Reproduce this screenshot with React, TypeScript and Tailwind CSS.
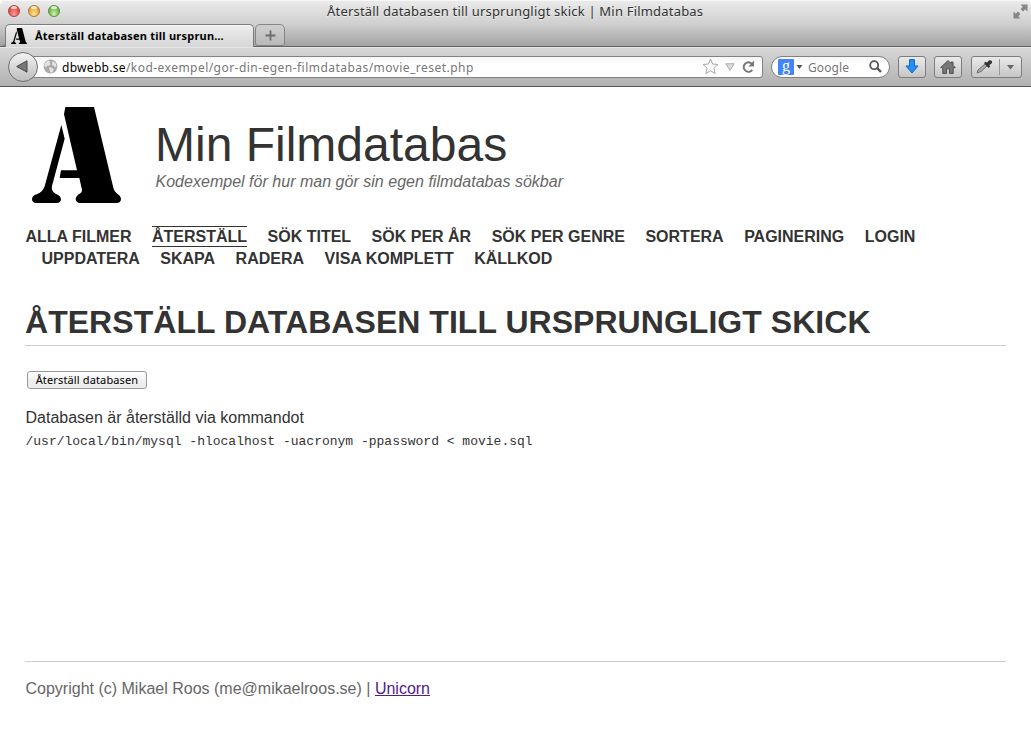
import React from "react";

const NAV = [
  "ALLA FILMER",
  "ÅTERSTÄLL",
  "SÖK TITEL",
  "SÖK PER ÅR",
  "SÖK PER GENRE",
  "SORTERA",
  "PAGINERING",
  "LOGIN",
  "UPPDATERA",
  "SKAPA",
  "RADERA",
  "VISA KOMPLETT",
  "KÄLLKOD",
];

function LetterLogo({ className }: { className: string }) {
  return (
    <svg className={className} viewBox="36 21 267 288" preserveAspectRatio="none" fill="#000">
      <path d="M136 21H222L280 263C282 271 287 277 292 281C299 286 303 291 303 297C303 305 298 309 289 309H181C172 309 167 304 167 297C167 291 173 285 181 280C187 276 187 270 184 261L178 234H119L123 211H171L132 43Z" />
      <path d="M124 75L134 116L96 258C94 270 99 277 108 282C117 286 123 291 123 298C123 305 118 309 110 309H49C40 309 36 304 36 298C36 290 41 286 50 283C62 279 70 271 74 259Z" />
    </svg>
  );
}

function Light({ tone }: { tone: string }) {
  return (
    <span className={`relative block h-3 w-3 overflow-hidden rounded-full border ${tone}`}>
      <span className="absolute left-[2px] top-0 h-[3px] w-[6px] rounded-full bg-white/70" />
    </span>
  );
}

function TitleBar() {
  return (
    <div className="flex h-6 items-center pl-2">
      <div className="flex w-[100px] gap-2 pb-[2px]">
        <Light tone="border-[#a8433f] bg-radial-[at_50%_85%] from-[#ff9f98] via-[#ee625d] to-[#c53c38]" />
        <Light tone="border-[#a9752f] bg-radial-[at_50%_85%] from-[#ffe795] via-[#f5b84f] to-[#c98a30]" />
        <Light tone="border-[#578c43] bg-radial-[at_50%_85%] from-[#d1f3a6] via-[#8bc965] to-[#58993f]" />
      </div>
      <div className="-mt-[2px] flex-1 whitespace-nowrap pl-[219px] text-[13px] leading-6 tracking-[0.2px] text-[#333] [text-shadow:0_1px_0_#ffffff80]">
        Återställ databasen till ursprungligt skick | Min Filmdatabas
      </div>
      <svg className="mb-[2px] mr-[3px] h-[15px] w-[15px]" viewBox="0 0 15 15" fill="#858585">
        <path d="M7.5 0.5H14.5V7.5L12.2 5.2L10 7.4L7.6 5L9.8 2.8ZM0.5 7.5L2.8 9.8L5 7.6L7.4 10L5.2 12.2L7.5 14.5H0.5Z" />
      </svg>
    </div>
  );
}

function TabStrip() {
  return (
    <div className="flex h-[23px] items-end border-b border-[#636363] bg-linear-to-b from-transparent to-black/10">
      <div className="-mb-px h-[23px] w-[5px] rounded-br-[4px] border-b border-[#636363]" />
      <div className="-mb-px flex h-[23px] w-[249px] items-center rounded-t-[5px] border-x border-t border-[#7b7b7b] bg-linear-to-b from-[#eeeeee] to-[#d6d6d6] pl-[5px] shadow-[inset_0_1px_0_#fafafa]">
        <LetterLogo className="h-4 w-4" />
        <span className="pl-2 text-[11px] font-bold tracking-[0.23px] text-black">
          Återställ databasen till ursprun…
        </span>
      </div>
      <div className="ml-px flex h-[22px] w-[30px] items-center justify-center rounded-t-[5px] rounded-b-[3px] border border-[#858585] bg-linear-to-b from-[#cfcfcf] to-[#b9b9b9]">
        <svg className="h-[11px] w-[11px]" viewBox="0 0 11 11" stroke="#6b6b6b" strokeWidth="1.8">
          <path d="M5.5 0.5V10.5M0.5 5.5H10.5" />
        </svg>
      </div>
    </div>
  );
}

function AddressBar() {
  return (
    <div className="flex flex-1 items-center">
      <div className="relative z-10 flex h-[30px] w-[30px] items-center justify-center rounded-full border border-[#6f6f6f] bg-linear-to-b from-[#f3f3f3] to-[#bdbdbd]">
        <svg className="mr-[3px] h-[13px] w-3" viewBox="0 0 12 13">
          <path d="M0.7 6.5L11 0.8V12.2Z" fill="#777" stroke="#484848" />
        </svg>
      </div>
      <div className="-ml-2 flex h-[22px] flex-1 items-center rounded-r-[3px] border border-[#828282] bg-linear-to-b from-[#f6f6f6] to-white to-40% pl-[12px] pr-[7px]">
        <svg className="h-[15px] w-[15px]" viewBox="0 0 15 15">
          <circle cx="7.5" cy="7.5" r="6.9" fill="#a9a9a9" />
          <path d="M2 4L5 1.6L7.5 2.5L6.5 4L7.6 5L5.5 7L4 6.5L3.4 8.5L1.2 7Z" fill="#e3e3e3" />
          <path d="M9.5 2L12.5 4L13.6 7L12 8.5L10.5 6.5L8.8 6Z" fill="#e3e3e3" />
          <path d="M6 8.3L9 8.8L10.8 10.7L9 13.8L7 13L6.6 10.8Z" fill="#e3e3e3" />
        </svg>
        <div className="flex-1 whitespace-nowrap pl-1 pt-[2px] text-[12px] leading-5 tracking-[0.46px] text-[#777]">
          <span className="tracking-[0.3px] text-black">dbwebb.se</span>/kod-exempel/gor-din-egen-filmdatabas/movie_reset.php
        </div>
        <svg className="h-[17px] w-[17px]" viewBox="0 0 17 17" fill="#fafafa" stroke="#a8a8a8">
          <path d="M8.5 1L10.7 6L16 6.5L12 10.1L13.2 15.6L8.5 12.8L3.8 15.6L5 10.1L1 6.5L6.3 6Z" />
        </svg>
        <svg className="ml-[6px] h-2 w-[10px]" viewBox="0 0 10 8" fill="#ddd" stroke="#aaa">
          <path d="M0.8 0.8H9.2L5 7.2Z" />
        </svg>
        <svg className="ml-[7px] h-[13px] w-[13px]" viewBox="0 0 13 13" fill="none">
          <path d="M10.3 9.8A4.7 4.7 0 1 1 8.8 3L9.8 3.8" stroke="#777" strokeWidth="2" />
          <path d="M12 0.5V6.4H6.4Z" fill="#777" />
        </svg>
      </div>
    </div>
  );
}

function SearchBox() {
  return (
    <div className="ml-2 flex h-[22px] w-[119px] items-center rounded-full border border-[#828282] bg-linear-to-b from-[#f6f6f6] to-white to-40% pl-[6px] pr-[7px]">
      <span className="flex h-4 w-4 items-center justify-center rounded-[1px] bg-[#4285f4] pb-[3px] font-['Liberation_Serif',serif] text-[16px] leading-[13px] text-white">
        g
      </span>
      <svg className="ml-[2px] h-1 w-[7px]" viewBox="0 0 6 4" fill="#555">
        <path d="M0 0H6L3 4Z" />
      </svg>
      <span className="flex-1 pl-[5px] pt-[2px] text-[12px] leading-5 tracking-[0.1px] text-[#777]">Google</span>
      <svg className="h-[13px] w-[13px]" viewBox="0 0 13 13" fill="none" stroke="#555">
        <circle cx="5.2" cy="5.2" r="4" strokeWidth="1.8" />
        <path d="M8.2 8.2L12 12" strokeWidth="2.4" />
      </svg>
    </div>
  );
}

const BUTTON =
  "flex h-[22px] items-center justify-center rounded-[3px] border border-[#7d7d7d] bg-linear-to-b from-[#eaeaea] to-[#c6c6c6]";

function Toolbar() {
  return (
    <div className="flex h-10 items-center border-b border-[#555] bg-linear-to-b from-[#d8d8d8] to-[#b1b1b1] pl-2 pr-[9px] shadow-[inset_0_1px_0_#e6e6e6]">
      <AddressBar />
      <SearchBox />
      <div className={`${BUTTON} ml-2 w-7`}>
        <svg className="h-[15px] w-[14px]" viewBox="0 0 14 15">
          <path d="M4.5 0.6H9.5V7H13L7 14L1 7H4.5Z" fill="#1e8fff" stroke="#1766c0" />
        </svg>
      </div>
      <div className={`${BUTTON} ml-2 w-7`}>
        <svg className="h-[14px] w-4" viewBox="0 0 16 14">
          <path
            d="M8 0.6L11 3.4V2H13V5.3L15.3 7.6H13.2V13.4H9.5V8.8H6.5V13.4H2.8V7.6H0.7Z"
            fill="#777"
            stroke="#4f4f4f"
          />
        </svg>
      </div>
      <div className={`${BUTTON} ml-[9px] w-[51px]`}>
        <svg className="-ml-[3px] h-4 w-[17px]" viewBox="0 0 17 16">
          <path d="M1 14L2 11L9 5L11 7L5 12.5Z" fill="#aaa" stroke="#6f6f6f" />
          <path d="M8 4L9.5 2.8L11 3.5L13 1.5C15 0.5 17 2.5 15.8 4.2L13.5 6L14 7.8L12.5 9Z" fill="#333" />
        </svg>
        <span className="ml-[6px] h-4 w-px bg-[#999]" />
        <svg className="ml-[7px] mt-[2px] h-[5px] w-[7px]" viewBox="0 0 7 5" fill="#666">
          <path d="M0 0H7L3.5 4.5Z" />
        </svg>
      </div>
    </div>
  );
}

export default function App() {
  return (
    <div className="flex h-[733px] w-[1031px] flex-col overflow-hidden bg-white font-['Liberation_Sans',Arial,sans-serif] text-base text-[#333]">
      <div className="rounded-t-[5px] bg-linear-to-b from-[#ececec] to-[#b4b4b4] to-[47px] font-['Noto_Sans',sans-serif] shadow-[inset_0_1px_0_#f7f7f7]">
        <TitleBar />
        <TabStrip />
        <Toolbar />
      </div>

      <header className="flex h-[139px] pl-8 pt-5">
        <LetterLogo className="h-24 w-[89px]" />
        <div className="pl-[34px]">
          <div className="pt-[10px] text-[48px] leading-[55px]">Min Filmdatabas</div>
          <div className="pl-[0.5px] text-[16px] italic leading-[20px] tracking-[0.02px] text-[#666]">
            Kodexempel för hur man gör sin egen filmdatabas sökbar
          </div>
        </div>
      </header>

      <nav className="ml-[25.5px] h-[77px] w-[981px] font-bold leading-[22px]">
        {NAV.map((label, i) => (
          <React.Fragment key={label}>
            <span
              className={`inline-block whitespace-nowrap ${i > 0 ? "ml-4" : ""} ${
                label === "ÅTERSTÄLL" ? "h-[21px] border-y border-[#333] leading-[20px]" : ""
              }`}
            >
              {label}
            </span>{" "}
          </React.Fragment>
        ))}
      </nav>

      <main className="mx-[25px] flex-1">
        <h1 className="h-[43px] whitespace-nowrap border-b border-[#ccc] text-[32px] font-bold leading-[39px] tracking-[0.04px]">
          ÅTERSTÄLL DATABASEN TILL URSPRUNGLIGT SKICK
        </h1>
        <button className="ml-[2px] mt-[25px] block h-[18px] w-[120px] whitespace-nowrap rounded-[3px] border border-[#999] bg-linear-to-b from-white via-[#f0f0f0] to-[#ececec] text-center font-['Noto_Sans',sans-serif] text-[11px] leading-4 tracking-[0.14px] text-black">
          Återställ databasen
        </button>
        <p className="mt-[18px] pl-[0.5px] leading-[22px]">Databasen är återställd via kommandot</p>
        <code className="block whitespace-pre pl-[0.5px] pt-[2px] font-['Liberation_Mono',monospace] text-[13px] leading-[22px]">
          /usr/local/bin/mysql -hlocalhost -uacronym -ppassword &lt; movie.sql
        </code>
      </main>

      <footer className="mx-[25px] h-[72px] border-t border-[#ccc] pl-[0.5px] pt-4 leading-[22px] text-[#666]">
        Copyright (c) Mikael Roos (me@mikaelroos.se) | <a className="text-[#551a8b] underline">Unicorn</a>
      </footer>
    </div>
  );
}
